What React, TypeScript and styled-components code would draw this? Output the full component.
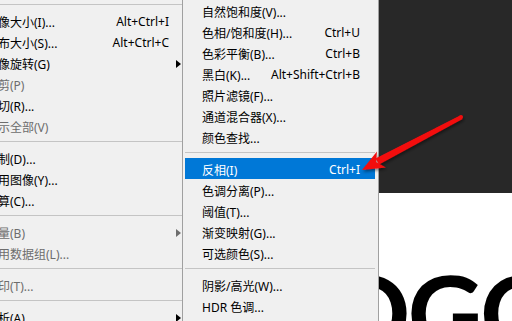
import { createGlobalStyle } from 'styled-components'
import styled from 'styled-components'

const GlobalStyle = createGlobalStyle`
  html, body {
    margin: 0;
    padding: 0;
    background: #ffffff;
    overflow: hidden;
  }
  body {
    font-family: "Noto Sans", "Noto Sans CJK SC", sans-serif;
  }
`

declare interface MenuEntry {
    label?: string
    shortcut?: string
    disabled?: boolean
    submenu?: boolean
    active?: boolean
    separator?: boolean
}

const imageMenu: MenuEntry[] = [
    { label: '图像大小(I)...', shortcut: 'Alt+Ctrl+I' },
    { label: '画布大小(S)...', shortcut: 'Alt+Ctrl+C' },
    { label: '图像旋转(G)', submenu: true },
    { label: '裁剪(P)', disabled: true },
    { label: '裁切(R)...' },
    { label: '显示全部(V)', disabled: true },
    { separator: true },
    { label: '复制(D)...' },
    { label: '应用图像(Y)...' },
    { label: '计算(C)...' },
    { separator: true },
    { label: '变量(B)', disabled: true, submenu: true },
    { label: '应用数据组(L)...', disabled: true },
    { separator: true },
    { label: '陷印(T)...', disabled: true },
    { separator: true },
    { label: '分析(A)', submenu: true },
]

const adjustMenu: MenuEntry[] = [
    { label: '自然饱和度(V)...' },
    { label: '色相/饱和度(H)...', shortcut: 'Ctrl+U' },
    { label: '色彩平衡(B)...', shortcut: 'Ctrl+B' },
    { label: '黑白(K)...', shortcut: 'Alt+Shift+Ctrl+B' },
    { label: '照片滤镜(F)...' },
    { label: '通道混合器(X)...' },
    { label: '颜色查找...' },
    { separator: true },
    { label: '反相(I)', shortcut: 'Ctrl+I', active: true },
    { label: '色调分离(P)...' },
    { label: '阈值(T)...' },
    { label: '渐变映射(G)...' },
    { label: '可选颜色(S)...' },
    { separator: true },
    { label: '阴影/高光(W)...' },
    { label: 'HDR 色调...' },
]

const Screen = styled.div`
    position: relative;
    display: flex;
    width: 512px;
    height: 321px;
    overflow: hidden;
    font-size: 12px;
`

const MainMenu = styled.div`
    width: 182px;
    flex: none;
    background: #f0f0f0;
    border-right: 1px solid #a0a0a0;
    overflow: hidden;
`

const MainMenuList = styled.div`
    width: 222px;
    margin-left: -40px;
    margin-top: -1px;
`

const SubMenu = styled.div`
    width: 195px;
    flex: none;
    background: #f0f0f0;
    border-right: 1px solid #a0a0a0;
    overflow: hidden;
`

const MainRow = styled.div<{ $disabled?: boolean }>`
    display: flex;
    align-items: center;
    height: 21px;
    padding-top: 2px;
    box-sizing: border-box;
    padding-left: 26px;
    color: ${p => p.$disabled ? '#6d6d6d' : '#000000'};
    white-space: nowrap;
`

const SubRow = styled.div<{ $active?: boolean }>`
    display: flex;
    align-items: center;
    justify-content: space-between;
    height: 21px;
    padding: 2px 15px 0 17px;
    box-sizing: border-box;
    margin: 0 3px 0 2px;
    background: ${p => p.$active ? '#0078d7' : 'transparent'};
    color: ${p => p.$active ? '#ffffff' : '#000000'};
    white-space: nowrap;
`

const Label = styled.span`
    flex: 1;
`

const Shortcut = styled.span`
    text-align: right;
`

const ArrowSlot = styled.span`
    display: flex;
    justify-content: flex-end;
    width: 13px;
    padding-right: 1px;
    box-sizing: border-box;
`

const Caret = styled.span<{ $disabled?: boolean }>`
    width: 0;
    height: 0;
    border-top: 4px solid transparent;
    border-bottom: 4px solid transparent;
    border-left: 5px solid ${p => p.$disabled ? '#6d6d6d' : '#000000'};
`

const Separator = styled.div<{ $inset?: boolean }>`
    height: 11px;
    display: flex;
    align-items: center;
    margin: ${p => p.$inset ? '0 3px 0 2px' : '0'};

    &::after {
        content: '';
        flex: 1;
        height: 1px;
        background: #c4c4c4;
    }
`

const Workspace = styled.div`
    flex: 1;
    display: flex;
    flex-direction: column;
`

const DarkPanel = styled.div`
    height: 193px;
    background: #282828;
`

const Canvas = styled.div`
    flex: 1;
    background: #ffffff;
    overflow: hidden;
`

const LogoText = styled.div`
    font-family: "Lato", sans-serif;
    font-size: 104px;
    line-height: 1;
    font-weight: 700;
    color: #000000;
    white-space: nowrap;
    margin-top: 66px;
    margin-left: -101px;
    letter-spacing: -3px;
`

const Overlay = styled.svg`
    position: absolute;
    left: 0;
    top: 0;
    pointer-events: none;
`

function MainMenuItem({ entry }: { entry: MenuEntry }) {
    if (entry.separator) {
        return <Separator />
    }
    return (
        <MainRow $disabled={entry.disabled}>
            <Label>{entry.label}</Label>
            {entry.shortcut ? <Shortcut>{entry.shortcut}</Shortcut> : null}
            <ArrowSlot>
                {entry.submenu ? <Caret $disabled={entry.disabled} /> : null}
            </ArrowSlot>
        </MainRow>
    )
}

function SubMenuItem({ entry }: { entry: MenuEntry }) {
    if (entry.separator) {
        return <Separator $inset />
    }
    return (
        <SubRow $active={entry.active}>
            <Label>{entry.label}</Label>
            {entry.shortcut ? <Shortcut>{entry.shortcut}</Shortcut> : null}
        </SubRow>
    )
}

function PointerArrow() {
    // tail near (461,117), tip at (362,170)
    return (
        <Overlay width="512" height="321" viewBox="0 0 512 321">
            <defs>
                <filter id="shadow" x="-20%" y="-20%" width="140%" height="140%">
                    <feDropShadow dx="1" dy="2" stdDeviation="1.5" floodColor="#000000" floodOpacity="0.45" />
                </filter>
            </defs>
            <g filter="url(#shadow)" fill="#f20d0d">
                <path d="M460 115.5 L462.5 119 L379 164.5 L375.5 158.5 Z" />
                <circle cx="461" cy="117" r="2" />
                <path d="M362 170 L377 151.5 L376 162 L386 167.5 Z" />
            </g>
        </Overlay>
    )
}

export default function App() {
    return (
        <>
            <GlobalStyle />
            <Screen>
                <MainMenu>
                    <MainMenuList>
                        <Separator />
                        {imageMenu.map((entry, i) => <MainMenuItem key={i} entry={entry} />)}
                    </MainMenuList>
                </MainMenu>
                <SubMenu>
                    {adjustMenu.map((entry, i) => <SubMenuItem key={i} entry={entry} />)}
                </SubMenu>
                <Workspace>
                    <DarkPanel />
                    <Canvas>
                        <LogoText>LOGO</LogoText>
                    </Canvas>
                </Workspace>
                <PointerArrow />
            </Screen>
        </>
    )
}
